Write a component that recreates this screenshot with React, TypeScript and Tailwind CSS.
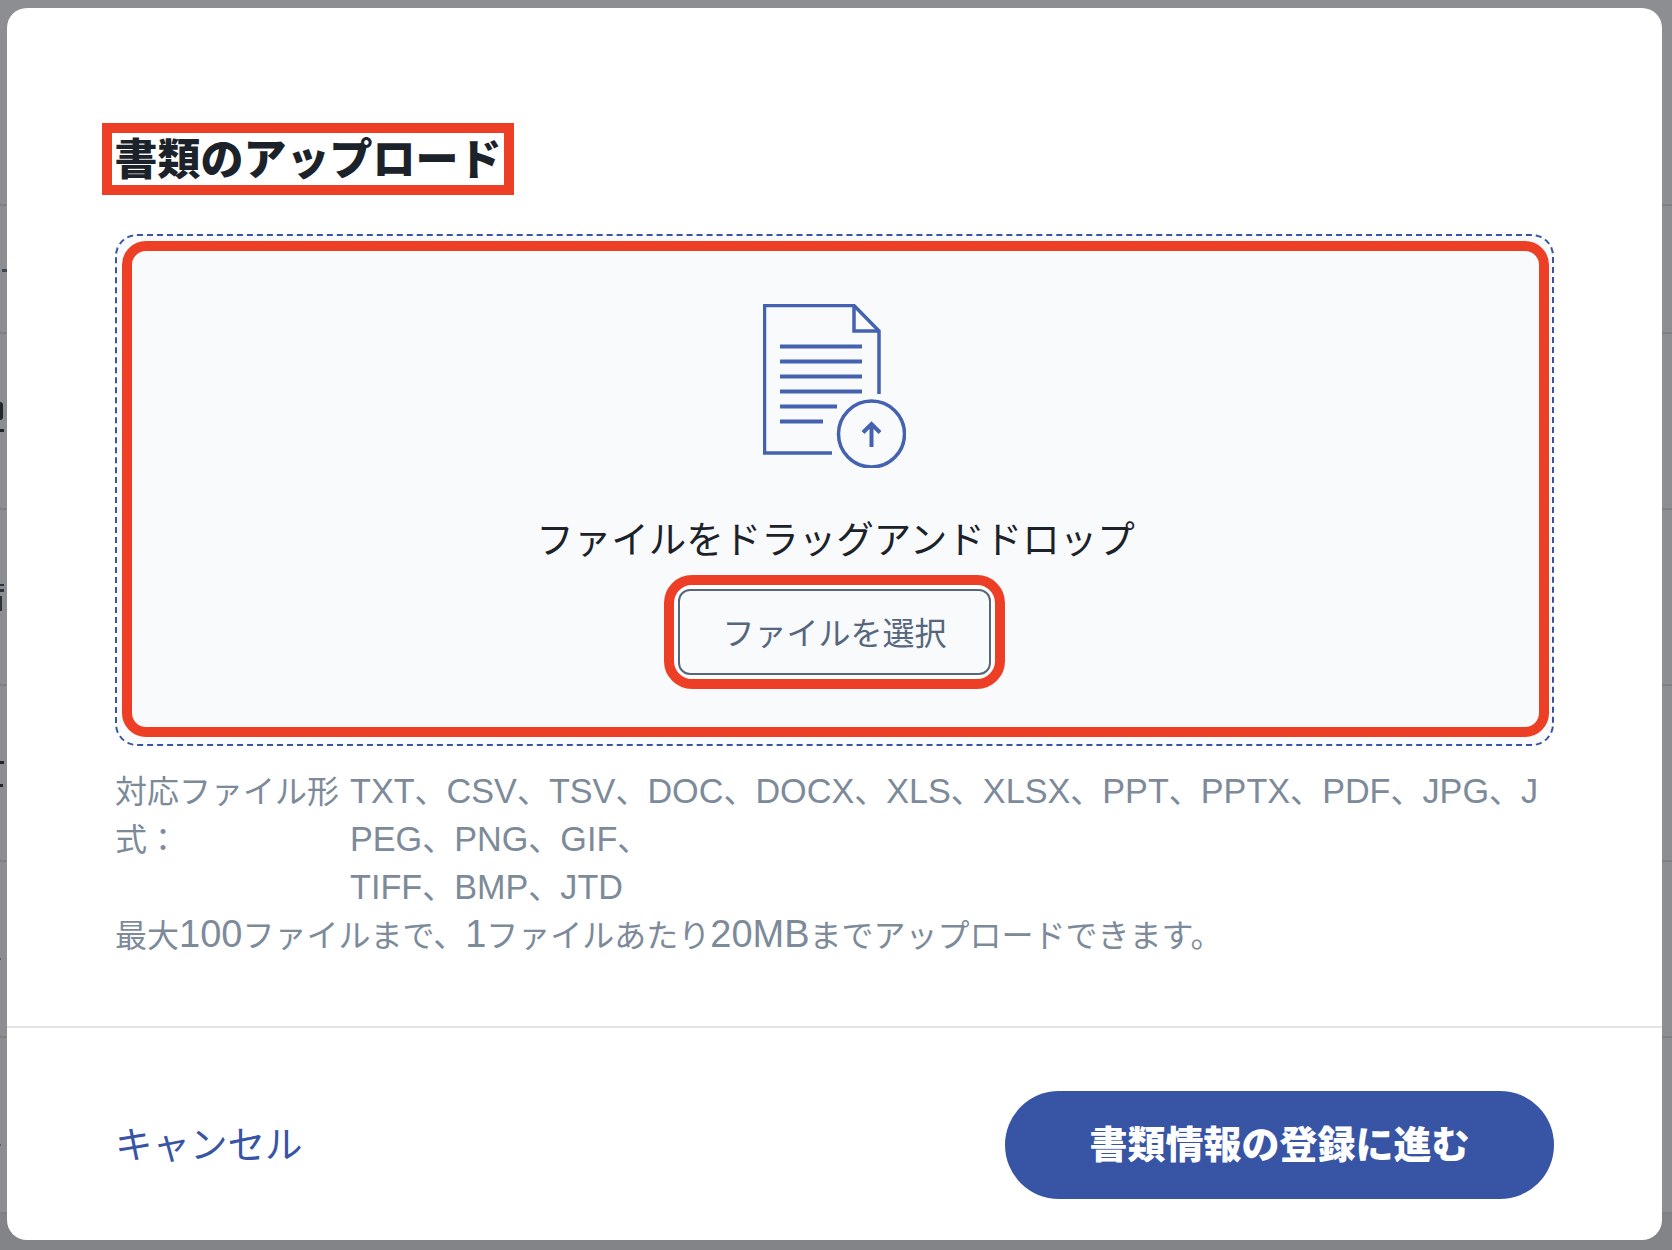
const font = "font-['Liberation_Sans','Noto_Sans_CJK_JP',sans-serif]";

function UploadIcon() {
  return (
    <svg className="mr-[3px]" width="143" height="164" viewBox="0 0 143 164" fill="none" stroke="#4462b0" strokeWidth="3.5">
      <path d="M69 149H1.5V1.5H91L116 27V90" />
      <path d="M91 1.5V27H116" />
      <path d="M17 42.5H99M17 57.5H99M17 72.5H99M17 87.5H99M17 102.5H74M17 117.5H60" strokeWidth="4" />
      <circle cx="108.5" cy="130" r="33" />
      <path d="M108.5 143V120M100 128.5L108.5 120L117 128.5" strokeWidth="4" />
    </svg>
  );
}

function Row({ className, children }: { className: string; children?: React.ReactNode }) {
  return <div className={`border-b-2 border-[#7f8084] flex flex-col items-start ${className}`}>{children}</div>;
}

// latin runs sit larger than the kana around them
function L({ children }: { children: React.ReactNode }) {
  return <span className="text-[34.2px] leading-none">{children}</span>;
}

function N({ children }: { children: React.ReactNode }) {
  return <span className="text-[38px] leading-none">{children}</span>;
}

export default function App() {
  return (
    <div className={`relative w-[1672px] h-[1250px] overflow-hidden bg-[#8d8e92] ${font}`}>
      {/* page behind the dialog */}
      <div className="flex flex-col">
        <Row className="h-[206px]" />
        <Row className="h-[128px] pt-[63px]">
          <div className="ml-[2px] h-[3px] w-[5px] bg-[#3f4752]" />
        </Row>
        <Row className="h-[176px] pt-[68px]">
          <div className="h-[18px] w-[3px] rounded-r-full bg-[#20262e]" />
          <div className="mt-[9px] h-[3px] w-[4px] bg-[#20262e]" />
        </Row>
        <Row className="h-[176px] pt-[74px]">
          <div className="h-[2px] w-[4px] bg-[#2c333c]" />
          <div className="mt-[3px] h-[3px] w-[4px] bg-[#2c333c]" />
          <div className="mt-[4px] h-[15px] w-[2px] bg-[#2c333c]" />
        </Row>
        <Row className="h-[176px] pt-[75px]">
          <div className="h-[3px] w-[4px] bg-[#20262e]" />
          <div className="mt-[20px] h-[3px] w-[3px] bg-[#20262e]" />
        </Row>
        <Row className="h-[176px] pt-[96px]">
          <div className="h-[2px] w-[1px] bg-[#5a5f66]" />
        </Row>
        <Row className="h-[176px] pt-[106px]">
          <div className="h-[2px] w-[1px] bg-[#5a5f66]" />
        </Row>
        <div className="h-[36px] bg-[#838488]" />
      </div>

      {/* dialog */}
      <div className="absolute left-[7px] top-[8px] w-[1655px] h-[1232px] rounded-[20px] bg-white flex flex-col">
        <div className="px-[108px] pt-[115px] pb-[66px]">
          <h2 className="-ml-[13px] w-fit border-[10px] border-[#ec3f25] px-[2.5px] pt-[2px] text-[43px] leading-[50px] font-black text-[#1c2229] whitespace-nowrap">
            書類のアップロード
          </h2>

          <div className="mt-[39px] h-[512px] rounded-[22px] border-2 border-dashed border-[#3855a5] bg-[#f9fafc] pl-[5px] pr-[3px] pt-[5px] pb-[7px]">
            <div className="h-full rounded-[24px] border-[10px] border-[#ec3f25] bg-[#f9fafc] flex flex-col items-center pt-[53px]">
              <UploadIcon />
              <p className="mt-[48px] text-[37.5px] leading-[48px] text-[#1c2229] whitespace-nowrap">ファイルをドラッグアンドドロップ</p>
              <div className="mt-[11px] mr-[2px] rounded-[28px] border-[10px] border-[#ec3f25] bg-white p-[4px]">
                <button className="w-[313px] h-[86px] rounded-[12px] border-2 border-[#56677d] bg-[#f9fafc] pt-[3px] text-[32px] text-[#56677d]">
                  ファイルを選択
                </button>
              </div>
            </div>
          </div>

          <div className="mt-[22px] text-[32px] leading-[48px] text-[#7d8a9a] whitespace-nowrap">
            <div className="flex">
              <div className="w-[235px]">
                対応ファイル形
                <br />
                式：
              </div>
              <div>
                <L>TXT</L>、<L>CSV</L>、<L>TSV</L>、<L>DOC</L>、<L>DOCX</L>、<L>XLS</L>、<L>XLSX</L>、<L>PPT</L>、<L>PPTX</L>、<L>PDF</L>、<L>JPG</L>、<L>J</L>
                <br />
                <L>PEG</L>、<L>PNG</L>、<L>GIF</L>、
                <br />
                <L>TIFF</L>、<L>BMP</L>、<L>JTD</L>
              </div>
            </div>
            <p>
              最大<N>100</N>ファイルまで、<N>1</N>ファイルあたり<N>20MB</N>までアップロードできます。
            </p>
          </div>
        </div>

        <div className="border-t-2 border-[#e1e4ea] px-[108px] pt-[63px] flex items-center justify-between">
          <a className="text-[37.5px] text-[#3855a5]">キャンセル</a>
          <button className="w-[549px] h-[108px] rounded-full bg-[#3855a5] text-[38px] font-black text-white">
            書類情報の登録に進む
          </button>
        </div>
      </div>
    </div>
  );
}
